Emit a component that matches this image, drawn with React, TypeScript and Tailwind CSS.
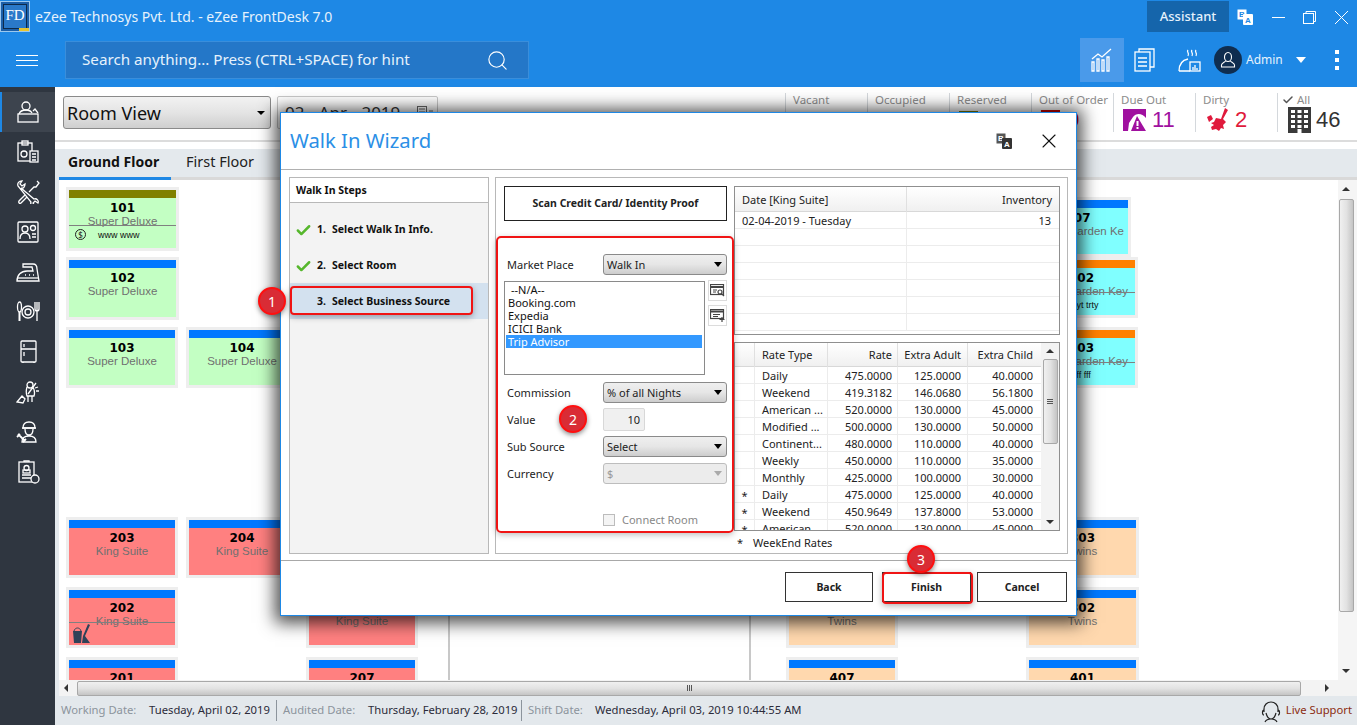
import { Check, Search, X } from "lucide-react";

const uiFont = { fontFamily: "'Noto Sans', sans-serif" };

const rooms = [
  { no: "101", name: "Super Deluxe", x: 10, y: 10, w: 107, h: 58, bg: "bg-[#c3ffc3]", bar: "bg-[#808000]", line: 35, note: "www www", coin: true, noteLeft: 29 },
  { no: "102", name: "Super Deluxe", x: 10, y: 80, w: 107, h: 57, bg: "bg-[#c3ffc3]", bar: "bg-[#0078ff]" },
  { no: "103", name: "Super Deluxe", x: 10, y: 150, w: 106, h: 55, bg: "bg-[#c3ffc3]", bar: "bg-[#0078ff]" },
  { no: "104", name: "Super Deluxe", x: 130, y: 150, w: 106, h: 55, bg: "bg-[#c3ffc3]", bar: "bg-[#0078ff]" },
  { no: "203", name: "King Suite", x: 10, y: 340, w: 106, h: 55, bg: "bg-[#ff8080]", bar: "bg-[#0078ff]" },
  { no: "204", name: "King Suite", x: 130, y: 340, w: 106, h: 55, bg: "bg-[#ff8080]", bar: "bg-[#0078ff]" },
  { no: "202", name: "King Suite", x: 10, y: 410, w: 106, h: 55, bg: "bg-[#ff8080]", bar: "bg-[#0078ff]", line: 32, mop: true },
  { no: "206", name: "King Suite", x: 250, y: 410, w: 106, h: 55, bg: "bg-[#ff8080]", bar: "bg-[#0078ff]" },
  { no: "201", name: "King Suite", x: 10, y: 480, w: 106, h: 55, bg: "bg-[#ff8080]", bar: "bg-[#0078ff]" },
  { no: "207", name: "King Suite", x: 250, y: 480, w: 106, h: 55, bg: "bg-[#ff8080]", bar: "bg-[#0078ff]" },
  { no: "403", name: "Twins", x: 730, y: 340, w: 106, h: 55, bg: "bg-[#ffd8ae]", bar: "bg-[#0078ff]" },
  { no: "402", name: "Twins", x: 730, y: 410, w: 106, h: 55, bg: "bg-[#ffd8ae]", bar: "bg-[#0078ff]" },
  { no: "407", name: "Twins", x: 730, y: 480, w: 106, h: 55, bg: "bg-[#ffd8ae]", bar: "bg-[#0078ff]" },
  { no: "303", name: "Twins", x: 970, y: 340, w: 107, h: 55, bg: "bg-[#ffd8ae]", bar: "bg-[#0078ff]" },
  { no: "302", name: "Twins", x: 970, y: 410, w: 107, h: 55, bg: "bg-[#ffd8ae]", bar: "bg-[#0078ff]" },
  { no: "401", name: "Twins", x: 970, y: 480, w: 107, h: 55, bg: "bg-[#ffd8ae]", bar: "bg-[#0078ff]" },
  { no: "507", name: "Garden Ke", x: 969, y: 20, w: 100, h: 54, bg: "bg-[#80ffff]", bar: "bg-[#0078ff]", right: "text-right pr-[4px]" },
  { no: "502", name: "Garden Key", x: 969, y: 80, w: 107, h: 55, bg: "bg-[#80ffff]", bar: "bg-[#ff8000]", line: 32, note: "tryt trty", right: "text-right pr-[7px]", noteLeft: 43 },
  { no: "503", name: "Garden Key", x: 969, y: 150, w: 107, h: 55, bg: "bg-[#80ffff]", bar: "bg-[#ff8000]", line: 32, note: "fff fff", right: "text-right pr-[7px]", noteLeft: 46 },
];

const rateRows = [
  ["", "Daily", "475.0000", "125.0000", "40.0000"],
  ["", "Weekend", "419.3182", "146.0680", "56.1800"],
  ["", "American ...", "520.0000", "130.0000", "45.0000"],
  ["", "Modified ...", "500.0000", "130.0000", "50.0000"],
  ["", "Continent...", "480.0000", "110.0000", "40.0000"],
  ["", "Weekly", "450.0000", "110.0000", "35.0000"],
  ["", "Monthly", "425.0000", "100.0000", "30.0000"],
  ["*", "Daily", "475.0000", "125.0000", "40.0000"],
  ["*", "Weekend", "450.9649", "137.8000", "53.0000"],
  ["*", "American ...", "520.0000", "130.0000", "45.0000"],
];

function Icon({ children, size = 24, vb = 24, className = "" }: { children: React.ReactNode; size?: number; vb?: number; className?: string }) {
  return (
    <svg width={size} height={size} viewBox={`0 0 ${vb} ${vb}`} fill="none" stroke="currentColor" strokeWidth={1.3} className={className}>
      {children}
    </svg>
  );
}

const navIcons = [
  <>
    <circle cx="10" cy="6" r="4" /><path d="M3 14c1-3 4-4 7-4s5 1 6 3M17 11l2-2 3 4" /><rect x="2" y="14" width="20" height="8" />
  </>,
  <>
    <rect x="2" y="3" width="14" height="18" /><rect x="6" y="1" width="6" height="4" /><circle cx="8" cy="14" r="3" /><rect x="14" y="11" width="8" height="11" fill="#2f3640" /><path d="M16 14h4M16 17h4M16 20h4" />
  </>,
  <>
    <path d="M2 6c-1-3 1-5 4-5L4 4l2 2 3-2c0 3-2 5-4 4l13 11c3-1 5 2 4 4l-3-2-2 2 2 3c-3 0-5-2-4-4z" />
    <path d="M21 1l2 2-3 4-2 0-5 5M9 15l-6 6c-1 2 1 3 2 2l6-6" />
  </>,
  <>
    <rect x="2" y="2" width="20" height="20" rx="1" /><circle cx="9" cy="9" r="3" /><path d="M4 19c0-4 2-6 5-6s5 2 5 6" /><circle cx="17" cy="8" r="2.5" /><path d="M16 14h4M16 17h4" />
  </>,
  <>
    <path d="M7 4h10c3 0 4 2 4 5l2 12H1c0-6 4-10 10-10h6l-1-4H7z" /><path d="M1 18h22" /><path d="M9 15h1M13 15h1M17 15h1" />
  </>,
  <>
    <ellipse cx="3.5" cy="7" rx="2" ry="5" /><path d="M3.5 12v9" strokeWidth={2} /><circle cx="12" cy="12" r="6" /><circle cx="12" cy="12" r="3" /><path d="M19 2v7c0 2 1 2 2 2s2 0 2-2V2M21 2v19" />
  </>,
  <>
    <rect x="5" y="1" width="15" height="21" rx="1" /><path d="M5 9h15M8 4v3M8 12v4M7 22v1M18 22v1" />
  </>,
  <>
    <circle cx="14" cy="5" r="3" /><path d="M11 7c-1 3-1 6 0 9h7c1-3 0-7-1-9M12 16v6M16 16v6M20 3l-8 11M1 22l5-6 3 3-2 4z" /><path d="M19 8l3-1M20 11l3 0" />
  </>,
  <>
    <path d="M7 8c0-4 2-6 6-6s6 2 6 6z" /><path d="M6 8h14M9 9c0 4 2 6 4 6s4-2 4-6M6 22c0-4 3-6 7-6s7 2 7 6z" /><path d="M2 14l7 7M1 17l3-3M7 22l3-3" strokeWidth={1.8} />
  </>,
  <>
    <rect x="3" y="2" width="15" height="20" /><path d="M8 2V1h5v1" /><circle cx="10.5" cy="8" r="2.5" /><rect x="7" y="10" width="7" height="3" /><path d="M6 15h9M6 18h9" /><circle cx="19" cy="19" r="4" fill="#2f3640" />
  </>,
];

function Logo() {
  return (
    <div className="relative w-[30px] h-[31px] mt-px border border-[#9cc8ee] bg-[#1c5fa8] overflow-hidden">
      <div className="absolute inset-[2px] border border-[#0d2a4a] bg-[#2a79c9] flex items-start justify-center">
        <span className="text-white text-[15px] leading-[20px]" style={{ fontFamily: "'Liberation Serif', serif" }}>FD</span>
      </div>
      <div className="absolute right-0 bottom-0 w-[10px] h-[3px] bg-[#e8c530]" />
    </div>
  );
}

function TranslateIcon({ dark }: { dark?: boolean }) {
  return (
    <svg width="16" height="16" viewBox="0 0 16 16">
      <rect x="0.5" y="0.5" width="9" height="10" fill={dark ? "#555" : "#fff"} />
      <text x="2" y="8" fontSize="8" fontWeight="700" fill={dark ? "#fff" : "#1e88e5"} fontFamily="Liberation Sans, sans-serif">B</text>
      <rect x="6" y="5" width="10" height="11" rx="1" fill={dark ? "#333" : "#fff"} />
      <text x="8" y="14" fontSize="8" fontWeight="700" fill={dark ? "#fff" : "#1e88e5"} fontFamily="Liberation Sans, sans-serif">A</text>
    </svg>
  );
}

function Header() {
  return (
    <header className="h-[87px] shrink-0 bg-[#1e88e5] text-white flex flex-col" style={uiFont}>
      <div className="h-[38px] flex items-start">
        <Logo />
        <span className="ml-[5px] mt-[7px] text-[14px] leading-[20px] text-[#e6f2fc]">eZee Technosys Pvt. Ltd. - eZee FrontDesk 7.0</span>
        <div className="ml-auto mt-px w-[82px] h-[31px] bg-[#1565ab] flex items-center justify-center text-[13px] font-medium text-[#e6f2fc]">Assistant</div>
        <div className="w-[128px] h-[34px] flex items-center pl-[8px]">
          <TranslateIcon />
          <svg width="13" height="13" viewBox="0 0 13 13" stroke="white" fill="none" className="ml-[19px]"><path d="M0 6.5h13" /></svg>
          <svg width="13" height="13" viewBox="0 0 13 13" stroke="white" fill="none" className="ml-[18px]"><rect x="0.5" y="2.5" width="10" height="10" /><path d="M3 2.5V.5h9.5v10h-2" /></svg>
          <svg width="13" height="13" viewBox="0 0 13 13" stroke="white" fill="none" className="ml-[19px]"><path d="M0 0l13 13M13 0L0 13" /></svg>
        </div>
      </div>
      <div className="flex items-center h-[44px]">
        <div className="w-[65px] pl-[16px] flex flex-col gap-[4px]">
          <span className="block w-[22px] h-px bg-white" />
          <span className="block w-[22px] h-px bg-white" />
          <span className="block w-[22px] h-px bg-white" />
        </div>
        <div className="w-[464px] h-[38px] bg-[#2477c8] border border-[#3a8edb] flex items-center pl-[16px] pr-[19px] justify-between">
          <span className="text-[15.2px] text-[#e6f2fc] -mt-[2px]">Search anything... Press (CTRL+SPACE) for hint</span>
          <Search size={23} strokeWidth={1.2} />
        </div>
        <div className="ml-auto flex items-center h-[44px]">
          <div className="w-[44px] h-[44px] bg-[#4a9aea] flex items-center justify-center">
            <Icon size={24}>
              <path d="M2 23v-9h2v9zM7 23V11h2v12zM12 23V12h2v11zM17 23V9h2v14zM2 11l6-5 4 3 9-8" />
            </Icon>
          </div>
          <div className="w-[42px] flex justify-center">
            <Icon size={24}>
              <rect x="2" y="4" width="15" height="19" fill="#1e88e5" /><path d="M6 4V1h15v18h-4M5 10h9M5 14h9M5 18h9" />
            </Icon>
          </div>
          <div className="w-[48px] flex justify-center pr-[2px]">
            <Icon size={24}>
              <path d="M11 2c-2 2 2 3 0 6M15 2c-2 2 2 3 0 6M19 2c-2 2 2 3 0 6M2 23c0-7 4-11 9-12" /><rect x="13" y="14" width="10" height="9" /><path d="M16 22v-3M18 22v-5M20 22v-2M2 23h11" />
            </Icon>
          </div>
          <div className="w-[28px] h-[28px] rounded-full bg-[#0f2d4f] flex items-center justify-center mr-[4px]">
            <svg width="18" height="18" viewBox="0 0 18 18" fill="none" stroke="white" strokeWidth="1.1">
              <ellipse cx="9" cy="6" rx="3.5" ry="4.5" /><path d="M6.5 10c0 1-4 2-4 4v2h13v-2c0-2-4-3-4-4" />
            </svg>
          </div>
          <span className="text-[12px] w-[50px] text-[#e6f2fc]">Admin</span>
          <span className="w-0 h-0 border-x-[5px] border-x-transparent border-t-[6px] border-t-white mr-[29px]" />
          <div className="flex flex-col gap-[4px] mr-[18px]">
            <span className="block w-[4px] h-[4px] bg-white" />
            <span className="block w-[4px] h-[4px] bg-white" />
            <span className="block w-[4px] h-[4px] bg-white" />
          </div>
        </div>
      </div>
    </header>
  );
}

function Sidebar() {
  return (
    <aside className="w-[55px] shrink-0 bg-[#2f3640] text-white pt-[5px]">
      {navIcons.map((path, i) => (
        <div key={i} className={`h-[40px] flex items-center justify-center ${i === 0 ? "bg-[#3d444e] border-l-2 border-[#1e88e5] pr-[2px]" : ""}`}>
          <Icon size={24}>{path}</Icon>
        </div>
      ))}
    </aside>
  );
}

function Counter({ label, children }: { label: React.ReactNode; children?: React.ReactNode }) {
  return (
    <div className="w-[82px] h-[39px] border-l border-[#d4d8dc] pl-[7px]">
      <div className="text-[11.5px] leading-[14px] text-[#8c8c8c] whitespace-nowrap">{label}</div>
      <div className="flex items-center h-[25px]">{children}</div>
    </div>
  );
}

function Toolbar() {
  return (
    <div className="h-[55px] shrink-0 border-b-2 border-[#dcdcdc] flex items-start bg-white" style={uiFont}>
      <div className="ml-[8px] mt-[9px] w-[208px] h-[33px] rounded-[3px] border border-[#8a8a8a] bg-linear-to-b from-[#f2f2f2] via-[#e4e4e4] to-[#cfcfcf] flex items-center pl-[3px] pr-[5px] justify-between">
        <span className="text-[18px] text-[#111] mt-px">Room View</span>
        <span className="w-0 h-0 border-x-[4px] border-x-transparent border-t-[4px] border-t-black" />
      </div>
      <div className="ml-[6px] mt-[9px] w-[161px] h-[33px] rounded-[2px] border border-[#c8c8c8] pl-[7px] pr-[4px] text-[17px] leading-[33px] text-[#333] whitespace-nowrap flex items-center justify-between">
        <span>02 - Apr - 2019</span>
        <svg width="16" height="14" viewBox="0 0 16 14" fill="none" stroke="#666"><rect x="0.5" y="0.5" width="9" height="12" /><path d="M2 3h6M2 6h6M2 9h6M12 5h4" /></svg>
      </div>
      <div className="ml-auto -mr-[2px] mt-[6px] flex">
        <Counter label="Vacant"><span className="mt-[3px] w-[4px] h-[18px] bg-[#1e88e5]" /></Counter>
        <Counter label="Occupied"><span className="mt-[3px] w-[4px] h-[18px] bg-[#e07b20]" /></Counter>
        <Counter label="Reserved"><span className="ml-[2px] mt-[3px] w-[19px] h-[20px] bg-[#808000]" /></Counter>
        <Counter label="Out of Order">
          <span className="ml-[2px] w-[19px] h-[20px] bg-[#cc0000]" />
          <span className="ml-[7px] text-[22px] text-[#cc0000]" style={{ fontFamily: "'Liberation Sans', sans-serif" }}>0</span>
        </Counter>
        <Counter label="Due Out">
          <svg width="25" height="24" viewBox="0 0 25 24" className="ml-px">
            <path d="M1 1h23v9c-4-5-10-5-13-1l-4 6-1 8H1z" fill="#a0109f" />
            <path d="M15 8l9 15H9z" fill="#a0109f" />
            <rect x="14.5" y="13" width="2" height="5" fill="white" /><rect x="14.5" y="19" width="2" height="2" fill="white" />
          </svg>
          <span className="ml-[5px] text-[22px] text-[#a0109f]" style={{ fontFamily: "'Liberation Sans', sans-serif" }}>11</span>
        </Counter>
        <Counter label="Dirty">
          <svg width="26" height="24" viewBox="0 0 26 24" className="ml-[3px]" fill="#e01a3c">
            <path d="M19 0l3 2-5 9 3 3-3 3 1 4-3-1-2 3-3-2-4 1-1-3 3-2-3-2 3-1 2-4 5 1zM1 9l4-2 2 4-4 3z" />
          </svg>
          <span className="ml-[3px] text-[22px] text-[#e01a3c]" style={{ fontFamily: "'Liberation Sans', sans-serif" }}>2</span>
        </Counter>
        <Counter label={<span className="flex items-center gap-[3px] -ml-[6px] pl-[3px]"><Check size={12} strokeWidth={3} className="text-[#555]" />All</span>}>
          <svg width="23" height="26" viewBox="0 0 23 26" className="ml-[3px]">
            <rect width="23" height="26" fill="#3a3a3a" />
            {[3, 8, 13, 18].map((y) => [3, 9.5, 16].map((x) => <rect key={`${x}-${y}`} x={x} y={y} width="4" height="3" fill="white" />))}
            <rect x="9.5" y="22" width="4" height="4" fill="white" />
          </svg>
          <span className="ml-[5px] text-[22px] text-[#333]" style={{ fontFamily: "'Liberation Sans', sans-serif" }}>46</span>
        </Counter>
      </div>
    </div>
  );
}

function Tabs() {
  return (
    <div className="mt-[7px] h-[31px] shrink-0 bg-[#e4e9ed] flex items-end pl-[4px] relative" style={uiFont}>
      <div className="absolute left-[4px] right-0 bottom-0 h-[3px] bg-[#d9d9d9]" />
      <div className="relative w-[112px] h-[31px] border-b-[3px] border-[#1e88e5] text-[14px] leading-[25px] font-bold text-[#111] pl-[9px]">Ground Floor</div>
      <div className="h-[31px] ml-[15px] text-[14.5px] leading-[25px] text-[#222]">First Floor</div>
    </div>
  );
}

function RoomCard({ room }: { room: (typeof rooms)[number] }) {
  return (
    <div
      className={`absolute ${room.bg} shadow-[0_0_0_3px_#eeeeee] overflow-hidden text-center`}
      style={{ left: room.x, top: room.y, width: room.w, height: room.h }}
    >
      <div className={`h-[8px] ${room.bar}`} />
      <div className="text-[12px] leading-[14px] mt-[3px] font-bold text-black" style={{ fontFamily: "'DejaVu Sans', sans-serif" }}>{room.no}</div>
      <div className={`text-[11.5px] leading-[13px] text-[#707070] whitespace-nowrap ${room.right ?? ""}`} style={{ fontFamily: "'Liberation Sans', sans-serif" }}>{room.name}</div>
      {room.line && <div className="absolute left-0 right-0 h-px bg-[#808080]" style={{ top: room.line }} />}
      {room.note && (
        <div
          className="absolute top-[39px] left-0 right-0 text-left text-[9px] leading-[12px] text-[#111]"
          style={{ fontFamily: "'Liberation Sans', sans-serif", paddingLeft: room.noteLeft ?? 0 }}
        >
          {room.note}
        </div>
      )}
      {room.coin && <span className="absolute left-[6px] top-[39px] w-[11px] h-[11px] rounded-full border border-[#222] text-[8px] leading-[9px] text-[#222]">$</span>}
      {room.mop && (
        <svg width="17" height="20" viewBox="0 0 17 20" className="absolute left-[4px] top-[34px]" fill="#2f4258">
          <path d="M0 7h9l-1 12H1zM15 0l2 1-5 11 5 7H9l1-7z" />
          <path d="M1 7c1-4 6-4 7 0" fill="none" stroke="#2f4258" />
        </svg>
      )}
    </div>
  );
}

function Canvas() {
  return (
    <div className="flex-1 min-h-0 flex pl-[4px] bg-[#e4e9ed]">
      <div className="flex-1 relative overflow-hidden bg-white">
        <div className="absolute left-[389px] bottom-0 w-[2px] h-[70px] bg-[#c8c8c8]" />
        <div className="absolute left-[690px] bottom-0 w-[2px] h-[70px] bg-[#c8c8c8]" />
        {rooms.map((r) => <RoomCard key={r.no} room={r} />)}
      </div>
      <div className="w-[19px] shrink-0 flex flex-col items-center bg-[#f5f5f5] pr-[3px]">
        <span className="mt-[7px] w-0 h-0 border-x-[4px] border-x-transparent border-b-[4px] border-b-[#333]" />
        <div className="mt-[8px] w-[15px] h-[413px] rounded-[2px] border border-[#a8a8a8] bg-linear-to-r from-[#f0f0f0] via-[#e2e2e2] to-[#c4c4c4]" />
        <span className="mt-auto mb-[7px] w-0 h-0 border-x-[4px] border-x-transparent border-t-[4px] border-t-[#333]" />
      </div>
    </div>
  );
}

function BottomBars() {
  return (
    <>
      <div className="h-[16px] shrink-0 pl-[4px] bg-[#e4e9ed]">
        <div className="h-[16px] bg-[#f3f3f3] flex items-center">
          <span className="ml-[5px] w-0 h-0 border-y-[4px] border-y-transparent border-r-[4px] border-r-[#333]" />
          <div className="ml-[9px] w-[1224px] h-[15px] rounded-[2px] border border-[#a8a8a8] bg-linear-to-b from-[#f0f0f0] via-[#e2e2e2] to-[#c4c4c4] flex items-center justify-center gap-px">
            <span className="w-px h-[6px] bg-[#555]" /><span className="w-px h-[6px] bg-[#555]" /><span className="w-px h-[6px] bg-[#555]" />
          </div>
          <span className="ml-[24px] w-0 h-0 border-y-[4px] border-y-transparent border-l-[4px] border-l-[#333]" />
        </div>
      </div>
      <footer className="h-[29px] shrink-0 bg-[#e3e8ec] flex items-center pl-[6px] text-[11.25px] whitespace-nowrap" style={uiFont}>
        <span className="w-[88px] text-[#8c949c]">Working Date:</span>
        <span className="w-[127px] text-[#2b2b3a]">Tuesday, April 02, 2019</span>
        <span className="w-px h-[21px] bg-[#8c949c] mr-[6px]" />
        <span className="w-[85px] text-[#8c949c]">Audited Date:</span>
        <span className="w-[153px] text-[#2b2b3a]">Thursday, February 28, 2019</span>
        <span className="w-px h-[21px] bg-[#8c949c] mr-[6px]" />
        <span className="w-[67px] text-[#8c949c]">Shift Date:</span>
        <span className="text-[#2b2b3a]">Wednesday, April 03, 2019 10:44:55 AM</span>
        <svg width="20" height="22" viewBox="0 0 20 22" fill="none" stroke="#222" strokeWidth="1.2" className="ml-auto mt-[3px]">
          <path d="M3 11V8c0-4 3-7 7-7s7 3 7 7v3M3 9c-2 0-2 5 0 5M17 9c2 0 2 5 0 5M5 12c1 4 3 6 5 6s4-2 5-6M4 21c1-2 3-3 6-3s5 1 6 3" />
        </svg>
        <span className="ml-[5px] mr-[5px] text-[#8b2c10]">Live Support</span>
      </footer>
    </>
  );
}

function Caret({ disabled }: { disabled?: boolean }) {
  return <span className={`w-0 h-0 border-x-[4.5px] border-x-transparent border-t-[5px] ${disabled ? "border-t-[#aaa]" : "border-t-black"}`} />;
}

function SelectBox({ value, disabled }: { value: string; disabled?: boolean }) {
  return (
    <div
      className={`w-[124px] h-[21px] rounded-[3px] border border-[#8a8a8a] flex items-center justify-between pl-[3px] pr-[4px] ${
        disabled ? "bg-[#ececec] border-[#bdbdbd] text-[#999]" : "bg-linear-to-b from-[#efefef] via-[#e6e6e6] to-[#cdcdcd] text-[#222]"
      }`}
    >
      <span className="pt-[2px]">{value}</span>
      <Caret disabled={disabled} />
    </div>
  );
}

function FormRow({ label, children, className = "" }: { label: string; children: React.ReactNode; className?: string }) {
  return (
    <div className={`flex items-center ${className}`}>
      <span className="w-[99px] pl-[3px] pt-[2px] text-[#222]">{label}</span>
      {children}
    </div>
  );
}

function GhostButton({ children }: { children: React.ReactNode }) {
  return (
    <div className="w-[19px] h-[21px] border border-[#dcdcdc] flex items-center justify-center text-[#444]">
      {children}
    </div>
  );
}

function OutlineButton({ children, w }: { children: React.ReactNode; w: string }) {
  return <div className={`${w} h-[30px] pt-[2px] border border-[#333] bg-white flex items-center justify-center font-bold text-[10.5px] text-[#222]`}>{children}</div>;
}

function Badge({ n, cls }: { n: number; cls: string }) {
  return (
    <span className={`absolute w-[28px] h-[28px] rounded-full bg-[#d92c35] border-2 border-[#ff0f0f] shadow-[0_2px_5px_rgba(0,0,0,0.45)] flex items-center justify-center text-white text-[14px] ${cls}`}>
      {n}
    </span>
  );
}

function WizardSteps() {
  const steps = [
    { label: "Select Walk In Info.", done: true },
    { label: "Select Room", done: true },
    { label: "Select Business Source", done: false },
  ];
  return (
    <div className="w-[200px] shrink-0 border border-[#b8b8b8] bg-[#f3f3f3] flex flex-col text-[10.5px]">
      <div className="h-[25px] shrink-0 bg-white border-b border-[#b8b8b8] pl-[6px] font-bold text-[#111] leading-[24px]">Walk In Steps</div>
      <div className="pt-[8px]">
        {steps.map((s, i) => (
          <div key={s.label} className={`h-[36px] pt-[2px] flex items-center font-bold text-[#111] ${s.done ? "" : "bg-[#d3e1ef]"}`}>
            <span className="w-[27px] pl-[5px]">
              {s.done && <Check size={17} strokeWidth={3.5} className="text-[#56b72c]" />}
            </span>
            <span className="w-[15px]">{i + 1}.</span>
            <span>{s.label}</span>
          </div>
        ))}
      </div>
    </div>
  );
}

function BusinessForm() {
  const sources = ["--N/A--", "Booking.com", "Expedia", "ICICI Bank", "Trip Advisor"];
  return (
    <div className="w-[223px] shrink-0">
      <div className="h-[35px] border border-[#222] flex items-center justify-center font-bold text-[10.5px] text-[#222]">Scan Credit Card/ Identity Proof</div>
      <FormRow label="Market Place" className="mt-[33px]"><SelectBox value="Walk In" /></FormRow>
      <div className="mt-[6px] flex gap-[3px] items-start">
        <div className="w-[201px] h-[94px] border border-[#8a8a8a] bg-white pt-px pl-px pr-[2px] leading-[13px] text-[#111]">
          {sources.map((s, i) => (
            <div key={s} className={`h-[13px] ${i === 0 ? "pl-[5px]" : "pl-[2px]"} ${i === 4 ? "bg-[#3399ff] text-white" : ""}`}>{s}</div>
          ))}
        </div>
        <div className="flex flex-col gap-[4px] -mt-px">
          <GhostButton>
            <svg width="15" height="13" viewBox="0 0 15 13" fill="none" stroke="currentColor" strokeWidth="1.2"><rect x="0.5" y="0.5" width="13" height="10" /><path d="M1 3h12" strokeWidth="2" /><path d="M3 6h4M3 8h3" /><circle cx="10" cy="8" r="2" /><path d="M12 10l2 2" /></svg>
          </GhostButton>
          <GhostButton>
            <svg width="15" height="13" viewBox="0 0 15 13" fill="none" stroke="currentColor" strokeWidth="1.2"><rect x="0.5" y="0.5" width="13" height="9" /><path d="M1 2.5h12" strokeWidth="2" /><path d="M3 5.5h7M3 7.5h5M12 8v5M9.5 10.5h5" /></svg>
          </GhostButton>
        </div>
      </div>
      <FormRow label="Commission" className="mt-[7px]"><SelectBox value="% of all Nights" /></FormRow>
      <FormRow label="Value" className="mt-[5px]">
        <div className="w-[42px] h-[23px] border border-[#d8d8d8] rounded-[2px] bg-[#f0f0f0] text-right pr-[4px] leading-[21px] text-[#222]">10</div>
      </FormRow>
      <FormRow label="Sub Source" className="mt-[5px]"><SelectBox value="Select" /></FormRow>
      <FormRow label="Currency" className="mt-[6px]"><SelectBox value="$" disabled /></FormRow>
      <div className="mt-[28px] ml-[99px] flex items-center gap-[7px] text-[#888]">
        <span className="w-[12px] h-[12px] border border-[#bcbcbc] bg-[#f4f4f4]" />
        Connect Room
      </div>
    </div>
  );
}

function InventoryTable() {
  return (
    <div className="h-[149px] border border-[#8f8f8f] overflow-hidden">
      <div className="grid grid-cols-[172px_1fr] h-[25px] border-b border-[#d8d8d8] bg-linear-to-b from-white to-[#f0f0f0] text-[#222] leading-[25px]">
        <span className="pl-[7px] border-r border-[#e0e0e0]">Date [King Suite]</span>
        <span className="text-right pr-[7px]">Inventory</span>
      </div>
      {["02-04-2019 - Tuesday", "", "", "", "", "", ""].map((d, i) => (
        <div key={i} className="grid grid-cols-[172px_1fr] h-[17px] border-b border-[#ececec] text-[#222] leading-[17px]">
          <span className="pl-[7px] border-r border-[#ececec]">{d}</span>
          <span className="text-right pr-[8px]">{d ? "13" : ""}</span>
        </div>
      ))}
    </div>
  );
}

function RatesTable() {
  const cols = "grid grid-cols-[20px_73px_70px_70px_72px]";
  return (
    <div className="mt-[7px] h-[189px] border border-[#8f8f8f] overflow-hidden flex">
      <div className="flex-1 min-w-0">
        <div className={`${cols} h-[24px] border-b border-[#d8d8d8] bg-linear-to-b from-white to-[#f0f0f0] text-[#222] leading-[24px]`}>
          <span className="border-r border-[#e0e0e0]" />
          <span className="pl-[7px] border-r border-[#e0e0e0]">Rate Type</span>
          <span className="text-right pr-[5px] border-r border-[#e0e0e0]">Rate</span>
          <span className="text-right pr-[6px] border-r border-[#e0e0e0]">Extra Adult</span>
          <span className="text-right pr-[7px]">Extra Child</span>
        </div>
        {rateRows.map((r, i) => (
          <div key={i} className={`${cols} h-[17px] border-b border-[#ececec] text-[#222] leading-[17px]`}>
            <span className="border-r border-[#ececec] text-center pt-px">{r[0]}</span>
            <span className="pl-[7px] border-r border-[#ececec] whitespace-nowrap">{r[1]}</span>
            <span className="text-right pr-[5px] border-r border-[#ececec]">{r[2]}</span>
            <span className="text-right pr-[6px] border-r border-[#ececec]">{r[3]}</span>
            <span className="text-right pr-[7px]">{r[4]}</span>
          </div>
        ))}
      </div>
      <div className="w-[18px] shrink-0 bg-[#f3f3f3] flex flex-col items-center">
        <span className="mt-[6px] w-0 h-0 border-x-[4px] border-x-transparent border-b-[4px] border-b-[#333]" />
        <div className="mt-[6px] w-[15px] h-[85px] rounded-[2px] border border-[#a8a8a8] bg-linear-to-r from-[#f0f0f0] via-[#e2e2e2] to-[#c4c4c4] flex flex-col items-center justify-center gap-px">
          <span className="w-[6px] h-px bg-[#555]" /><span className="w-[6px] h-px bg-[#555]" /><span className="w-[6px] h-px bg-[#555]" />
        </div>
        <span className="mt-auto mb-[6px] w-0 h-0 border-x-[4px] border-x-transparent border-t-[4px] border-t-[#333]" />
      </div>
    </div>
  );
}

function WalkInWizard() {
  return (
    <div className="absolute left-[280px] top-[112px] w-[797px] h-[504px] bg-white border border-[#1e88e5] shadow-[0_2px_16px_5px_rgba(0,0,0,0.7)] flex flex-col text-[11px]" style={uiFont}>
      <div className="h-[57px] shrink-0 border-b border-[#b0b0b0] flex items-center pl-[9px] pr-[15px]">
        <span className="text-[20.25px] text-[#2b8fe6] -mt-[2px]">Walk In Wizard</span>
        <span className="ml-auto mr-[25px] flex"><TranslateIcon dark /></span>
        <X size={24} strokeWidth={1.1} className="text-[#111]" />
      </div>
      <div className="flex gap-[6px] px-[8px] pt-[7px] h-[384px] shrink-0">
        <WizardSteps />
        <div className="flex-1 border border-[#b8b8b8] pl-[8px] pt-[8px] flex gap-[7px]">
          <BusinessForm />
          <div className="w-[326px] shrink-0">
            <InventoryTable />
            <RatesTable />
            <div className="mt-[4px] pl-[3px] flex gap-[10px] text-[#222]"><span>*</span><span>WeekEnd Rates</span></div>
          </div>
        </div>
      </div>
      <div className="mt-[6px] flex-1 border-t border-[#a8a8a8] flex justify-end items-start pt-[11px] pr-[9px]">
        <OutlineButton w="w-[88px]">Back</OutlineButton>
        <div className="ml-[9px]"><OutlineButton w="w-[89px]">Finish</OutlineButton></div>
        <div className="ml-[6px]"><OutlineButton w="w-[90px]">Cancel</OutlineButton></div>
      </div>

      {/* red callouts drawn over the dialog */}
      <span className="absolute left-[9px] top-[173px] w-[183px] h-[29px] rounded-[4px] border-2 border-[#f01414] shadow-[0_2px_6px_rgba(0,0,0,0.3)]" />
      <span className="absolute left-[215px] top-[123px] w-[238px] h-[297px] rounded-[5px] border-2 border-[#f01414] shadow-[0_2px_6px_rgba(0,0,0,0.25)]" />
      <span className="absolute left-[601px] top-[459px] w-[91px] h-[32px] rounded-[4px] border-2 border-[#f01414] shadow-[0_2px_6px_rgba(0,0,0,0.3)]" />
      <Badge n={1} cls="left-[-23px] top-[174px]" />
      <Badge n={2} cls="left-[278px] top-[292px]" />
      <Badge n={3} cls="left-[626px] top-[432px]" />
    </div>
  );
}

export default function App() {
  return (
    <div className="relative w-[1357px] h-[725px] overflow-hidden flex flex-col bg-white">
      <Header />
      <div className="flex-1 min-h-0 flex">
        <Sidebar />
        <main className="flex-1 min-w-0 flex flex-col bg-white">
          <Toolbar />
          <Tabs />
          <Canvas />
          <BottomBars />
        </main>
      </div>
      <WalkInWizard />
    </div>
  );
}
